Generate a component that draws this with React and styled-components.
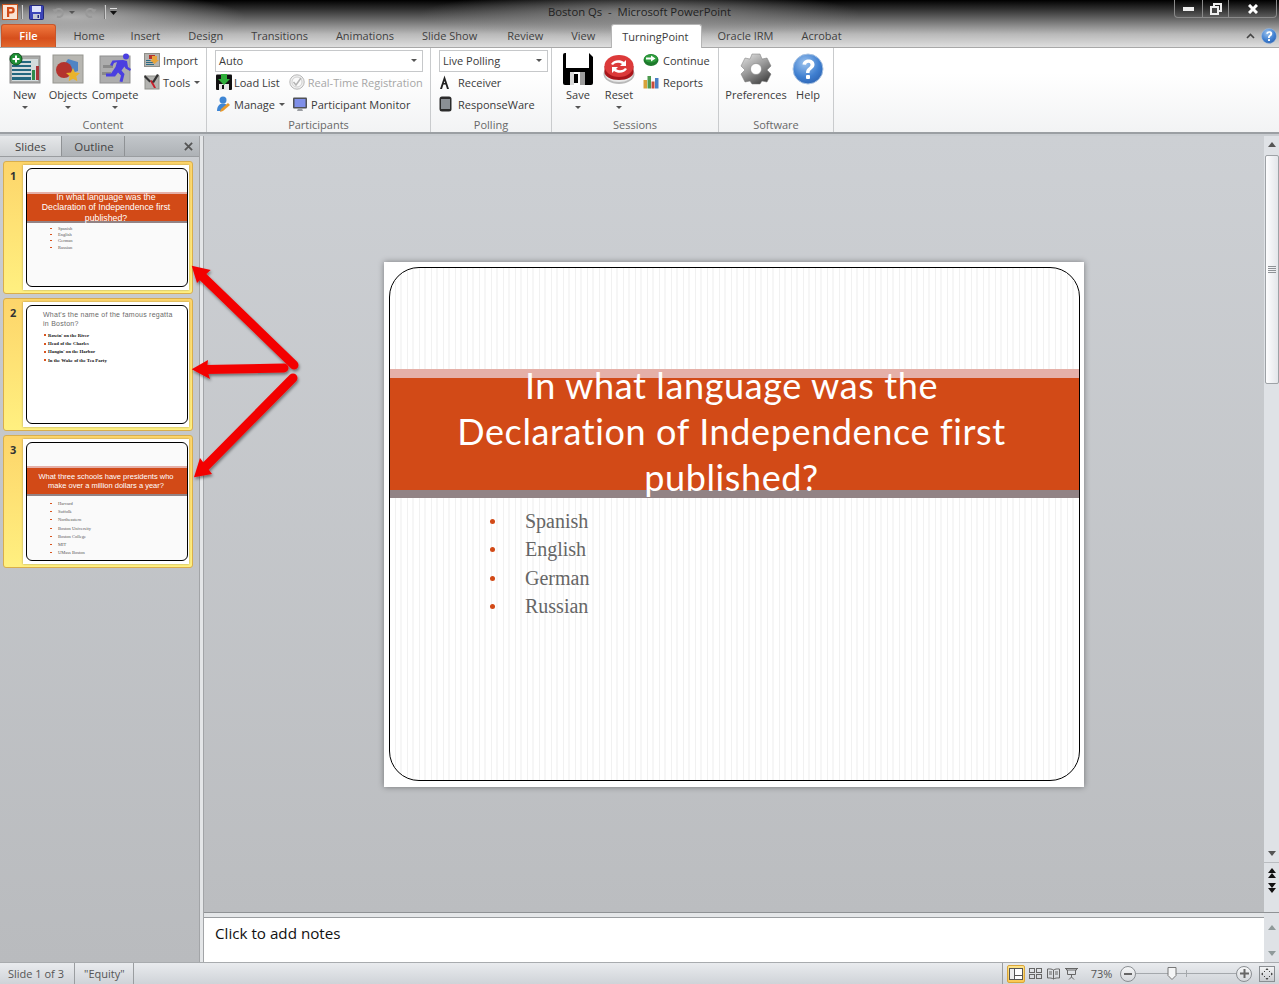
import React from "react";
import styled, { createGlobalStyle } from "styled-components";

const Global = createGlobalStyle`
  html, body { margin: 0; padding: 0; background: #c8ccd0; }
  * { box-sizing: border-box; }
`;

const Page = styled.div`
  position: relative;
  width: 1279px;
  height: 984px;
  overflow: hidden;
  display: flex;
  flex-direction: column;
  font-family: "Open Sans", "Noto Sans", sans-serif;
  font-size: 11px;
  color: #444;
`;

const Chrome = styled.div`
  height: 48px;
  flex: none;
  background:
    radial-gradient(ellipse 175px 26px at 70px 17px, rgba(185,185,185,0.9), rgba(185,185,185,0) 100%),
    radial-gradient(ellipse 220px 24px at 640px 14px, rgba(150,150,150,0.8), rgba(150,150,150,0) 100%),
    linear-gradient(to bottom, #000 0px, #2a2a2a 8px, #777 22px, #b8b8b8 34px, #dedede 47px);
`;

const TitleBar = styled.div`
  height: 24px;
  display: grid;
  grid-template-columns: 1fr auto 1fr;
  align-items: start;
`;

const Qat = styled.div`
  display: flex;
  align-items: center;
  height: 24px;
`;

const QatItem = styled.div`
  display: flex;
  align-items: center;
  flex: none;
  margin-left: ${(p) => p.$ml}px;
`;

const QatSep = styled.div`
  width: 2px;
  height: 14px;
  background: #777;
  border-right: 1px solid #ccc;
`;

const WindowTitle = styled.div`
  padding-top: 4px;
  font-size: 11.3px;
  color: #222;
  white-space: pre;
`;

const WindowControls = styled.div`
  justify-self: end;
  margin-right: 2px;
  display: flex;
  height: 18px;
  border: 1px solid #8a8a8a;
  border-top: none;
  border-radius: 0 0 4px 4px;
`;

const WindowButton = styled.div`
  width: ${(p) => p.$w}px;
  display: flex;
  align-items: center;
  justify-content: center;
  border-right: ${(p) => (p.$last ? "none" : "1px solid #8a8a8a")};
`;

const TabRow = styled.div`
  height: 24px;
  display: flex;
  align-items: stretch;
  padding-left: 1px;
  border-bottom: 1px solid #a8a8a8;
`;

const FileTab = styled.div`
  width: 55px;
  margin-right: 3.5px;
  padding-bottom: 1px;
  background: linear-gradient(to bottom, #f0793f, #d64f1c 60%, #e2682e);
  border: 1px solid #c8562a;
  border-bottom: none;
  border-radius: 3px 3px 0 0;
  color: #fff;
  font-weight: 600;
  display: flex;
  align-items: center;
  justify-content: center;
`;

const Tab = styled.div`
  padding: 0 ${(p) => p.$pr || 14}px 1px 14px;
  display: flex;
  align-items: center;
  color: #3f3f3f;
  white-space: nowrap;
`;

const ActiveTab = styled(Tab)`
  padding: 0 12px 1px 10px;
  margin: 0 2px -1px 2px;
  color: #3b3b3b;
  background: #fff;
  border: 1px solid #b5b5b5;
  border-bottom: none;
  border-radius: 3px 3px 0 0;
`;

const TabRight = styled.div`
  margin-left: auto;
  padding-right: 2px;
  display: flex;
  align-items: center;
  gap: 6px;
`;

const Ribbon = styled.div`
  height: 86px;
  flex: none;
  display: flex;
  background: linear-gradient(to bottom, #fff 30%, #f2f3f4);
  border-bottom: 2px solid #9b9fa3;
`;

const Group = styled.div`
  width: ${(p) => p.$w}px;
  flex: none;
  display: flex;
  flex-direction: column;
  border-right: 1px solid #c9cbcd;
  padding-left: ${(p) => p.$pad || 0}px;
`;

const GroupBody = styled.div`
  height: 69px;
  flex: none;
  display: flex;
`;

const GroupLabel = styled.div`
  height: 15px;
  margin-left: ${(p) => -(p.$pad || 0)}px;
  text-align: center;
  line-height: 15px;
  color: #686868;
`;

const LargeButton = styled.div`
  width: ${(p) => p.$w}px;
  flex: none;
  display: flex;
  flex-direction: column;
  align-items: center;
  padding-top: 4px;
  line-height: 13px;
  color: #3a3a3a;
  white-space: nowrap;
`;

const LargeIcon = styled.div`
  height: 34px;
  margin-bottom: 2px;
  display: flex;
  align-items: center;
  justify-content: center;
`;

const Caret = styled.span`
  display: inline-block;
  width: 0;
  height: 0;
  border-left: 3px solid transparent;
  border-right: 3px solid transparent;
  border-top: 3px solid #555;
  margin: ${(p) => p.$m || "5px 0 0 0"};
`;

const SmallCol = styled.div`
  display: flex;
  flex-direction: column;
  padding-top: 1px;
  margin-left: ${(p) => p.$ml || 0}px;
`;

const SmallRow = styled.div`
  height: 22px;
  display: flex;
  align-items: center;
  gap: ${(p) => p.$gap || 3}px;
  color: ${(p) => (p.$off ? "#a6a6a6" : "#3a3a3a")};
  white-space: nowrap;
`;

const SmallPair = styled.div`
  display: flex;
  margin-left: 1px;
  gap: ${(p) => p.$gap}px;
`;

const Combo = styled.div`
  height: 22px;
  width: ${(p) => p.$w}px;
  margin: 2px 0 -1px 0;
  border: 1px solid #c6c8ca;
  background: #fff;
  display: flex;
  align-items: center;
  justify-content: space-between;
  padding: 0 5px 1px 3px;
  color: #3a3a3a;
`;

const ParticipantCol = styled.div`
  display: flex;
  flex-direction: column;
`;

const Workspace = styled.div`
  flex: 1;
  min-height: 0;
  margin-top: 2px;
  display: flex;
`;

const LeftPane = styled.div`
  width: 200px;
  flex: none;
  display: flex;
  flex-direction: column;
  background: linear-gradient(to bottom, #cbced2, #b9bbbe);
  border-right: 1px solid #a2a4a7;
`;

const PaneTabs = styled.div`
  height: 21px;
  display: flex;
  flex: none;
  background: linear-gradient(to bottom, #c2c6ca, #aeb2b6);
  border-bottom: 1px solid #9a9da0;
`;

const PaneTab = styled.div`
  width: ${(p) => p.$w}px;
  display: flex;
  align-items: center;
  justify-content: center;
  font-size: 11.5px;
  color: #444;
  padding-left: ${(p) => p.$pad || 0}px;
  background: ${(p) => (p.$active ? "linear-gradient(to bottom, #e6e8ea, #cdd0d3)" : "transparent")};
  border-right: 1px solid #8f9295;
`;

const PaneClose = styled.div`
  margin-left: auto;
  padding-right: 6px;
  display: flex;
  align-items: center;
`;

const ThumbList = styled.div`
  padding: 4px 6px 0 3px;
  display: flex;
  flex-direction: column;
  gap: 4px;
`;

const ThumbCard = styled.div`
  height: 133px;
  display: flex;
  background: linear-gradient(to bottom, #fdd56a, #fff080);
  border: 1px solid #d9ae4c;
  border-radius: 3px;
  padding: 3px 3px 3px 6px;
`;

const ThumbNum = styled.div`
  width: 13px;
  flex: none;
  padding-top: 3px;
  font-weight: 700;
  font-size: 11px;
  color: #333;
`;

const ThumbPaper = styled.div`
  flex: 1;
  background: #fff;
  padding: 3px 1px 3px 3px;
  box-shadow: 0 0 2px rgba(0,0,0,0.35);
`;

const stripes = `repeating-linear-gradient(90deg, #fff 0, #fff 5px, #f1f1f1 5px, #f1f1f1 6px, #fff 6px, #fff 10px, #f6f6f6 10px, #f6f6f6 12px)`;

const ThumbFrame = styled.div`
  height: 100%;
  border: 1px solid #000;
  border-radius: 6px;
  overflow: hidden;
  padding-top: ${(p) => p.$top}px;
  background: ${(p) => (p.$plain ? "#fff" : "#fafafa")};
`;

const ThumbBand = styled.div`
  height: ${(p) => p.$h}px;
  background: #d24a17;
  border-top: 2px solid #e5b0a8;
  border-bottom: 2px solid #928385;
  display: flex;
  align-items: center;
  justify-content: center;
  text-align: center;
  color: #fff;
  font-family: "Liberation Sans", sans-serif;
  font-size: ${(p) => p.$fs}px;
  line-height: ${(p) => p.$lh}px;
  padding-right: 2px;
  white-space: nowrap;
`;

const ThumbTitle = styled.div`
  padding: 4px 0 0 16px;
  font-family: "Liberation Sans", sans-serif;
  font-size: 7px;
  line-height: 9px;
  letter-spacing: 0.25px;
  color: #6a6a6a;
  white-space: nowrap;
`;

const ThumbBullets = styled.ul`
  list-style: none;
  margin: 0;
  padding: ${(p) => p.$p};
  display: flex;
  flex-direction: column;
`;

const ThumbBullet = styled.li`
  height: ${(p) => p.$h}px;
  display: flex;
  align-items: center;
  font-family: "Liberation Serif", serif;
  font-size: ${(p) => p.$fs}px;
  font-weight: ${(p) => (p.$bold ? 700 : 400)};
  color: ${(p) => (p.$bold ? "#111" : "#555")};
  white-space: nowrap;
  &::before {
    content: "";
    width: 2px;
    height: ${(p) => (p.$bold ? 2 : 1)}px;
    background: #d9541e;
    margin-right: ${(p) => (p.$bold ? 2 : 6)}px;
    flex: none;
  }
`;

const Splitter = styled.div`
  width: 4px;
  flex: none;
  background: #e4e6e8;
  border-right: 1px solid #a2a4a7;
`;

const RightSide = styled.div`
  flex: 1;
  min-width: 0;
  display: flex;
  flex-direction: column;
`;

const EditRow = styled.div`
  flex: 1;
  min-height: 0;
  display: flex;
`;

const Stage = styled.div`
  flex: 1;
  display: flex;
  align-items: center;
  justify-content: center;
  background: linear-gradient(to bottom, #cdd0d4, #bbbdc0);
`;

const Slide = styled.div`
  width: 700px;
  height: 525px;
  background: #fff;
  padding: 5px 4px 6px 5px;
  box-shadow: 0 0 6px rgba(0,0,0,0.4);
`;

const SlideFrame = styled.div`
  height: 100%;
  border: 1px solid #000;
  border-radius: 30px;
  overflow: hidden;
  padding-top: 101px;
  background: ${stripes};
`;

const SlideBand = styled.div`
  height: 129px;
  background: #d24a17;
  border-top: 9px solid #e5b0a8;
  border-bottom: 8px solid #928385;
  display: flex;
  align-items: center;
  justify-content: center;
  padding: 0 6px 6px 0;
`;

const SlideTitle = styled.div`
  flex: none;
  color: #fff;
  text-align: center;
  font-family: "Lato", "Open Sans", sans-serif;
  font-size: 36px;
  line-height: 46px;
  letter-spacing: 0.62px;
`;

const SlideBullets = styled.ul`
  list-style: none;
  margin: 0;
  padding: 10px 0 0 100px;
`;

const SlideBullet = styled.li`
  height: 28.3px;
  display: flex;
  align-items: center;
  font-family: "Liberation Serif", serif;
  font-size: 20px;
  color: #666;
  &::before {
    content: "";
    width: 5px;
    height: 5px;
    border-radius: 50%;
    background: #d24a17;
    margin-right: 30px;
  }
`;

const VScroll = styled.div`
  width: 15px;
  flex: none;
  display: flex;
  flex-direction: column;
  align-items: center;
  background: #dfe2e6;
`;

const ScrollBtn = styled.div`
  width: 15px;
  height: ${(p) => p.$h || 17}px;
  flex: none;
  display: flex;
  align-items: center;
  justify-content: center;
  padding-bottom: ${(p) => p.$pb || 0}px;
  border-top: ${(p) => (p.$line ? "1px solid #b9bcc0" : "none")};
`;

const ScrollThumb = styled.div`
  width: 14px;
  height: 229px;
  margin-top: 2px;
  flex: none;
  background: linear-gradient(to right, #fdfdfe, #e3e6ea);
  border: 1px solid #9ea2a6;
  border-radius: 2px;
  display: flex;
  align-items: center;
  justify-content: center;
`;

const Grip = styled.div`
  width: 8px;
  height: 7px;
  background: repeating-linear-gradient(to bottom, #8e9296 0, #8e9296 1px, transparent 1px, transparent 2px);
`;

const ScrollSpace = styled.div`
  flex: 1;
`;

const Tri = styled.span`
  width: 0;
  height: 0;
  border-left: 4px solid transparent;
  border-right: 4px solid transparent;
  ${(p) => (p.$up ? "border-bottom" : "border-top")}: 5px solid ${(p) => p.$c || "#555"};
`;

const PageStep = styled.div`
  display: flex;
  flex-direction: column;
  align-items: center;
  gap: ${(p) => p.$gap}px;
`;

const NotesRow = styled.div`
  height: 50px;
  flex: none;
  display: flex;
  border-top: 1px solid #8f9295;
  background: #e4e6e8;
  padding-top: 4px;
`;

const Notes = styled.div`
  flex: 1;
  background: #fff;
  border-top: 1px solid #9a9da0;
  padding: 4px 0 0 11px;
  font-size: 15.2px;
  line-height: 22px;
  color: #111;
`;

const NotesScroll = styled(VScroll)`
  justify-content: space-between;
  margin-top: -4px;
  padding: 12px 0 6px;
`;

const StatusBar = styled.div`
  height: 22px;
  flex: none;
  display: flex;
  align-items: center;
  background: linear-gradient(to bottom, #e9ebee, #cfd3d8);
  border-top: 1px solid #a8abae;
  color: #555;
`;

const StatusCell = styled.div`
  height: 100%;
  width: ${(p) => p.$w}px;
  display: flex;
  align-items: center;
  padding-left: ${(p) => p.$pad}px;
  border-right: 1px solid #9a9da0;
  white-space: nowrap;
`;

const StatusRight = styled.div`
  margin-left: auto;
  height: 100%;
  display: flex;
  align-items: center;
  border-left: 1px solid #9a9da0;
  padding-left: 4px;
`;

const ViewBtn = styled.div`
  width: ${(p) => p.$w || 18}px;
  height: 18px;
  flex: none;
  display: flex;
  align-items: center;
  justify-content: center;
  background: ${(p) => (p.$active ? "linear-gradient(to bottom, #fde48c, #fbc850)" : "transparent")};
  border: ${(p) => (p.$active ? "1px solid #d9a53a" : "none")};
  border-radius: 2px;
`;

const Zoom = styled.div`
  width: 37px;
  margin-left: 2px;
  text-align: center;
  color: #555;
`;

const RoundBtn = styled.div`
  width: 16px;
  height: 16px;
  flex: none;
  border: 1px solid #8a8e92;
  border-radius: 50%;
  background: linear-gradient(to bottom, #f6f7f8, #d5d8dc);
  display: flex;
  align-items: center;
  justify-content: center;
  color: #555;
`;

const SliderTrack = styled.div`
  position: relative;
  width: 100px;
  height: 1px;
  background: #a4a8ac;
`;

const SliderThumb = styled.svg`
  position: absolute;
  left: 31px;
  top: -6px;
`;

const SliderTick = styled.div`
  position: absolute;
  left: 50px;
  top: -3px;
  width: 1px;
  height: 7px;
  background: #a4a8ac;
`;

const FitBtn = styled.div`
  width: 16px;
  height: 16px;
  margin: 0 4px 0 7px;
  flex: none;
  border: 1px solid #8a8e92;
  background: linear-gradient(to bottom, #f3f4f5, #c9ccd0);
  display: flex;
  align-items: center;
  justify-content: center;
`;

const ArrowLayer = styled.svg`
  position: absolute;
  left: 0;
  top: 0;
  pointer-events: none;
`;

/* drawings */
const PptLogo = () => (
  <svg width="16" height="16" viewBox="0 0 16 16">
    <rect x="0.5" y="0.5" width="15" height="15" fill="#fbe3d4" stroke="#c9551f" />
    <path d="M5 3h4.5a3 3 0 0 1 0 6.4H7.2V13H5z M7.2 5v2.4h2a1.2 1.2 0 0 0 0-2.4z" fill="#d14a17" fillRule="evenodd" />
  </svg>
);

const QatSave = () => (
  <svg width="15" height="15" viewBox="0 0 15 15">
    <rect x="0.5" y="0.5" width="14" height="14" rx="1" fill="#3c45b8" stroke="#23287c" />
    <rect x="3" y="1" width="9" height="6" fill="#dfe3fb" />
    <rect x="4" y="9" width="7" height="5" fill="#c5c8d6" />
    <rect x="8.5" y="10" width="1.5" height="3" fill="#23287c" />
  </svg>
);

const QatUndo = ({ flip }) => (
  <svg width="13" height="13" viewBox="0 0 13 13" style={flip ? { transform: "scaleX(-1)" } : undefined}>
    <path d="M3 6a4 4 0 1 1 2 4.5" fill="none" stroke="#999" strokeWidth="2" />
    <path d="M0.5 3.5L6 3 3.5 8z" fill="#999" />
  </svg>
);

const QatCustom = () => (
  <svg width="8" height="9" viewBox="0 0 8 9">
    <rect y="0" width="7" height="1" fill="#ddd" />
    <path d="M0 3h7L3.5 7z" fill="#111" />
  </svg>
);

const HelpDot = ({ s = 16 }) => (
  <svg width={s} height={s} viewBox="0 0 32 32">
    <defs>
      <radialGradient id={`h${s}`} cx="0.4" cy="0.3" r="0.8">
        <stop offset="0" stopColor="#9cc3ee" />
        <stop offset="0.6" stopColor="#3f7fd0" />
        <stop offset="1" stopColor="#2a5fae" />
      </radialGradient>
    </defs>
    <circle cx="16" cy="16" r="15" fill={`url(#h${s})`} stroke="#a9c3e2" />
    <path d="M10.5 11.5c.5-3.5 3-5 6-5 3.600 0 6 2 6 5 0 4.500-5 4.500-5 8.500h-3.500c0-5.500 4.500-5.500 4.500-8.300 0-1.200-.8-2-2-2-1.400 0-2.200.8-2.500 2z" fill="#fff" />
    <rect x="14" y="22" width="4" height="4" rx="1" fill="#fff" />
  </svg>
);

const NewIcon = () => (
  <svg width="32" height="32" viewBox="0 0 32 32">
    <rect x="1" y="3" width="30" height="27" fill="#a9aaa8" stroke="#8b8b8b" />
    <rect x="3" y="6" width="26" height="22" fill="#d4dbdd" />
    <g fill="#23677f">
      <rect x="3" y="12" width="19" height="2" />
      <rect x="3" y="16" width="19" height="2" />
      <rect x="3" y="20" width="19" height="2" />
      <rect x="3" y="24" width="19" height="3" />
    </g>
    <rect x="10" y="8" width="12" height="2" fill="#23677f" />
    <rect x="23" y="17" width="3" height="10" fill="#2f8a4c" />
    <rect x="27" y="13" width="3" height="14" fill="#a8343a" />
    <circle cx="7" cy="6" r="6" fill="#1e8f35" stroke="#0c4f1a" />
    <path d="M6 2.500h2v2.500h2.500v2H8v2.500H6V7H3.500V5H6z" fill="#fff" />
  </svg>
);

const ObjectsIcon = () => (
  <svg width="32" height="32" viewBox="0 0 32 32">
    <rect x="1" y="2" width="30" height="28" fill="#b7b6b1" stroke="#969690" />
    <path d="M16 6l10 3 0 9-9 3-6-8z" fill="#4f84c4" />
    <circle cx="12" cy="17" r="8" fill="#b4332e" />
    <path d="M21 15l2 4.500 5 .5-3.700 3.300 1 5-4.300-2.600-4.300 2.600 1-5L14 20l5-.5z" fill="#e9b32b" />
  </svg>
);

const CompeteIcon = () => (
  <svg width="32" height="32" viewBox="0 0 32 32">
    <rect x="1" y="3" width="30" height="27" fill="#adadad" stroke="#909090" />
    <path d="M4 12h10v3H4zM3 19h9v3H3z" fill="#8a8a8a" />
    <circle cx="27" cy="3.500" r="3" fill="#4a3fe0" />
    <path d="M24 7l4 1 1 6 3 2-1 2-4.500-2.500-1-2-3 4 3 3.500-2 8-3-.5 1.500-6-3-3-3 4H7v-3h5l4.500-6.500 1.500-5-3 1-1.500 3-2.500-1 2.500-4.500z" fill="#4a3fe0" />
  </svg>
);

const ImportIcon = () => (
  <svg width="16" height="16" viewBox="0 0 16 16">
    <rect x="0.5" y="1.500" width="15" height="13" fill="#b5b4b0" stroke="#8f8f8a" />
    <g fill="#2c6b84">
      <rect x="2" y="8" width="8" height="1" />
      <rect x="2" y="10" width="8" height="1" />
      <rect x="2" y="12" width="8" height="1" />
    </g>
    <rect x="5" y="3" width="6" height="4" fill="#b4332e" />
    <path d="M8 4h5v4h2l-4.500 4L6 8h2z" fill="#e8a43a" />
  </svg>
);

const ToolsIcon = () => (
  <svg width="16" height="16" viewBox="0 0 16 16">
    <rect x="1" y="2" width="14" height="13" fill="#b3b3b0" stroke="#8f8f8a" />
    <path d="M1 1l6 6-1.500 1.500L0 3z" fill="#333" />
    <path d="M6 7l4 7h2L8 6z" fill="#c8202c" />
    <path d="M15 1l-5 8-2-1 5-8z" fill="#333" />
  </svg>
);

const LoadListIcon = () => (
  <svg width="16" height="16" viewBox="0 0 16 16">
    <rect x="0" y="0.500" width="16" height="15.500" rx="1" fill="#111" />
    <rect x="3" y="10" width="10" height="6" fill="#e6e6e6" />
    <rect x="6" y="11" width="2" height="4" fill="#111" />
    <path d="M5 0h6v5h3l-6 6-6-6h3z" fill="#2fae3a" />
  </svg>
);

const ClockIcon = () => (
  <svg width="16" height="16" viewBox="0 0 16 16">
    <circle cx="8" cy="8" r="7.200" fill="#efefef" stroke="#b8b8b8" />
    <circle cx="8" cy="8" r="5" fill="#fafafa" stroke="#d0d0d0" />
    <path d="M4.500 8l2.500 3 5-7" fill="none" stroke="#b4b4b4" strokeWidth="1.500" />
  </svg>
);

const ManageIcon = () => (
  <svg width="15" height="16" viewBox="0 0 15 16">
    <circle cx="7" cy="4" r="3.500" fill="#3f86d4" />
    <path d="M1 15c0-5 2.500-7.500 6-7.500 2 0 3 .7 4 1.500L6 15z" fill="#3f86d4" />
    <path d="M12 7l2 2-7 6-3 1 1-3z" fill="#e89a2e" />
  </svg>
);

const MonitorIcon = () => (
  <svg width="16" height="15" viewBox="0 0 16 15">
    <rect x="1" y="0.500" width="14" height="11" rx="1" fill="#4f5156" />
    <rect x="2.500" y="2" width="11" height="8" fill="#7f8fe8" />
    <path d="M6 11.500h4l1 2.500H5z" fill="#9a9da2" />
  </svg>
);

const ReceiverIcon = () => (
  <svg width="11" height="15" viewBox="0 0 11 15">
    <path d="M5.500 0.500L10 14H8L5.500 6 3 14H1z" fill="#222" />
    <rect x="3" y="8" width="5" height="1.500" fill="#222" />
  </svg>
);

const PhoneIcon = () => (
  <svg width="13" height="16" viewBox="0 0 13 16">
    <rect x="0.500" y="0.500" width="12" height="15" rx="2.500" fill="#2b2b2b" />
    <rect x="2" y="3" width="9" height="10" fill="#8a8f94" />
  </svg>
);

const SaveIcon = () => (
  <svg width="30" height="32" viewBox="0 0 30 32">
    <path d="M0 2a2 2 0 0 1 2-2h24l4 4v26a2 2 0 0 1-2 2H2a2 2 0 0 1-2-2z" fill="#000" />
    <rect x="3" y="0" width="23" height="15" fill="#fff" />
    <rect x="7" y="19" width="15" height="13" fill="#fff" />
    <rect x="7" y="19" width="4" height="13" fill="#d8d8d8" />
    <rect x="11" y="21" width="4" height="9" fill="#000" />
    <rect x="17" y="19" width="5" height="13" fill="#9c9c9c" />
  </svg>
);

const ResetIcon = () => (
  <svg width="32" height="32" viewBox="0 0 32 32">
    <ellipse cx="16" cy="21" rx="15.500" ry="10" fill="#b9b9b9" />
    <ellipse cx="16" cy="21" rx="14" ry="8" fill="#e8e8e8" />
    <path d="M1.500 13v6c0 4.500 6.500 8 14.500 8s14.500-3.500 14.500-8v-6z" fill="#a9161b" />
    <ellipse cx="16" cy="13" rx="14.500" ry="11" fill="#dc3a3a" />
    <path d="M8 11c2-4 9-5 13-2l2-2v6h-6l2-2c-3-2-7-1.500-9 1zM24 16c-2 4-9 5-13 2l-2 2v-6h6l-2 2c3 2 7 1.500 9-1z" fill="#fff" />
  </svg>
);

const ContinueIcon = () => (
  <svg width="16" height="14" viewBox="0 0 16 14">
    <ellipse cx="8" cy="7" rx="7.500" ry="6" fill="#1d7a2c" />
    <ellipse cx="8" cy="5.500" rx="6.500" ry="4" fill="#2d9c3c" />
    <path d="M3 4.500h5V2.500l4.500 3L8 8.500V6.500H3z" fill="#fff" />
  </svg>
);

const ReportsIcon = () => (
  <svg width="16" height="14" viewBox="0 0 16 14">
    <rect x="0.500" y="5" width="3.500" height="8.500" fill="#d7a23a" />
    <rect x="4.500" y="1" width="3.500" height="12.500" fill="#4c9a4e" />
    <rect x="8.500" y="6.500" width="3" height="7" fill="#c94b3a" />
    <rect x="12" y="3" width="3.500" height="10.500" fill="#4a7fc4" />
  </svg>
);

const GearIcon = () => (
  <svg width="32" height="32" viewBox="0 0 32 32">
    <defs>
      <linearGradient id="gear" x1="0" y1="0" x2="0.6" y2="1">
        <stop offset="0" stopColor="#e8e8e8" />
        <stop offset="0.55" stopColor="#9a9a9a" />
        <stop offset="1" stopColor="#4d4d4d" />
      </linearGradient>
    </defs>
    <path fillRule="evenodd" fill="url(#gear)" stroke="#777" strokeWidth="0.5"
      d="M12 1h8l2 5 5-1 4 8-4 4 4 4-4 8-5-1-2 3h-8l-2-3-5 1-4-8 4-4-4-4 4-8 5 1z M16 10.500a5.500 5.500 0 1 0 0 11 5.500 5.500 0 0 0 0-11z" />
  </svg>
);

const CloseX = ({ s = 10, c = "#fff", w = 3 }) => (
  <svg width={s} height={s} viewBox="0 0 10 10">
    <path d="M1 1l8 8M9 1l-8 8" stroke={c} strokeWidth={w} />
  </svg>
);

const NormalView = () => (
  <svg width="14" height="12" viewBox="0 0 14 12">
    <rect x="0.500" y="0.500" width="13" height="11" fill="#fff" stroke="#555" />
    <path d="M5.500 0.500v11M5.500 7.500h8" stroke="#555" />
    <rect x="1" y="1" width="4" height="10" fill="#eee" />
  </svg>
);

const SorterView = () => (
  <svg width="13" height="11" viewBox="0 0 13 11" fill="none" stroke="#666">
    <rect x="0.500" y="0.500" width="5" height="4" />
    <rect x="7.500" y="0.500" width="5" height="4" />
    <rect x="0.500" y="6.500" width="5" height="4" />
    <rect x="7.500" y="6.500" width="5" height="4" />
  </svg>
);

const ReadingView = () => (
  <svg width="13" height="12" viewBox="0 0 13 12" fill="none" stroke="#666">
    <path d="M6.500 2C5 1 3 .8.500 1v9c2.500-.2 4.500 0 6 1 1.500-1 3.500-1.200 6-1V1C10 .8 8 1 6.500 2zM6.500 2v9" />
    <path d="M2 4h3M2 6h3M8 4h3M8 6h3" />
  </svg>
);

const ShowView = () => (
  <svg width="13" height="12" viewBox="0 0 13 12" fill="none" stroke="#666">
    <path d="M0 .5h13M1.500 .5v1.500h10V.5M2.500 2v4.500h8V2M6.500 6.500V9M4 11.500l2.500-2.500L9 11.500" />
  </svg>
);

const FitIcon = () => (
  <svg width="12" height="12" viewBox="0 0 12 12" fill="#444">
    <path d="M6 0l1.500 2h-3zM6 12l1.500-2h-3zM0 6l2-1.500v3zM12 6l-2-1.500v3z" />
    <rect x="3" y="3" width="1" height="1" />
    <rect x="8" y="3" width="1" height="1" />
    <rect x="3" y="8" width="1" height="1" />
    <rect x="8" y="8" width="1" height="1" />
  </svg>
);

const Arrow = ({ from, to, head }) => (
  <g>
    <line x1={from[0]} y1={from[1]} x2={to[0]} y2={to[1]} stroke="#f30000" strokeWidth="9" strokeLinecap="round" />
    <polygon points={head} fill="#f30000" />
  </g>
);

const ThumbSlide = ({ n, top, band, title, items, plain }) => (
  <ThumbCard>
    <ThumbNum>{n}</ThumbNum>
    <ThumbPaper>
      <ThumbFrame $top={top} $plain={plain}>
        {band && (
          <ThumbBand $h={band.h} $fs={band.fs} $lh={band.lh}>
            <div>{title}</div>
          </ThumbBand>
        )}
        {plain && <ThumbTitle>{title}</ThumbTitle>}
        <ThumbBullets $p={items.pad}>
          {items.list.map((t) => (
            <ThumbBullet key={t} $h={items.h} $fs={items.fs} $bold={plain}>
              {t}
            </ThumbBullet>
          ))}
        </ThumbBullets>
      </ThumbFrame>
    </ThumbPaper>
  </ThumbCard>
);

export default function App() {
  return (
    <Page>
      <Global />
      <Chrome>
        <TitleBar>
          <Qat>
            <QatItem $ml={2}><PptLogo /></QatItem>
            <QatItem $ml={3}><QatSep /></QatItem>
            <QatItem $ml={6}><QatSave /></QatItem>
            <QatItem $ml={8}><QatUndo /></QatItem>
            <QatItem $ml={4}><Caret $m="0" /></QatItem>
            <QatItem $ml={9}><QatUndo flip /></QatItem>
            <QatItem $ml={7}><QatSep /></QatItem>
            <QatItem $ml={4}><QatCustom /></QatItem>
          </Qat>
          <WindowTitle>Boston Qs  -  Microsoft PowerPoint</WindowTitle>
          <WindowControls>
            <WindowButton $w={28}>
              <svg width="11" height="4"><rect width="11" height="4" fill="#eee" /></svg>
            </WindowButton>
            <WindowButton $w={26}>
              <svg width="12" height="12" viewBox="0 0 12 12" fill="none" stroke="#eee" strokeWidth="2">
                <rect x="4" y="1" width="7" height="7" />
                <rect x="1" y="4" width="7" height="7" fill="#444" />
              </svg>
            </WindowButton>
            <WindowButton $w={47} $last>
              <CloseX />
            </WindowButton>
          </WindowControls>
        </TitleBar>
        <TabRow>
          <FileTab>File</FileTab>
          <Tab $pr={12}>Home</Tab>
          <Tab>Insert</Tab>
          <Tab>Design</Tab>
          <Tab>Transitions</Tab>
          <Tab>Animations</Tab>
          <Tab $pr={16}>Slide Show</Tab>
          <Tab>Review</Tab>
          <Tab>View</Tab>
          <ActiveTab>TurningPoint</ActiveTab>
          <Tab>Oracle IRM</Tab>
          <Tab>Acrobat</Tab>
          <TabRight>
            <svg width="9" height="6" viewBox="0 0 9 6">
              <path d="M1 5l3.500-3.500L8 5" fill="none" stroke="#444" strokeWidth="1.600" />
            </svg>
            <HelpDot />
          </TabRight>
        </TabRow>
      </Chrome>

      <Ribbon>
        <Group $w={207} $pad={7}>
          <GroupBody>
            <LargeButton $w={35}><LargeIcon><NewIcon /></LargeIcon>New<Caret /></LargeButton>
            <LargeButton $w={52}><LargeIcon><ObjectsIcon /></LargeIcon>Objects<Caret /></LargeButton>
            <LargeButton $w={42}><LargeIcon><CompeteIcon /></LargeIcon>Compete<Caret /></LargeButton>
            <SmallCol $ml={8}>
              <SmallRow><ImportIcon />Import</SmallRow>
              <SmallRow><ToolsIcon />Tools<Caret $m="0 0 0 1px" /></SmallRow>
            </SmallCol>
          </GroupBody>
          <GroupLabel $pad={7}>Content</GroupLabel>
        </Group>
        <Group $w={224} $pad={8}>
          <GroupBody>
            <ParticipantCol>
              <Combo $w={208}>Auto<Caret $m="0" /></Combo>
              <SmallRow>
                <SmallPair $gap={9}>
                  <SmallRow $gap={2}><LoadListIcon />Load List</SmallRow>
                  <SmallRow $gap={3} $off><ClockIcon />Real-Time Registration</SmallRow>
                </SmallPair>
              </SmallRow>
              <SmallRow>
                <SmallPair $gap={7}>
                  <SmallRow $gap={3}><ManageIcon />Manage<Caret $m="0 0 0 1px" /></SmallRow>
                  <SmallRow $gap={3}><MonitorIcon />Participant Monitor</SmallRow>
                </SmallPair>
              </SmallRow>
            </ParticipantCol>
          </GroupBody>
          <GroupLabel $pad={8}>Participants</GroupLabel>
        </Group>
        <Group $w={121} $pad={8}>
          <GroupBody>
            <ParticipantCol>
              <Combo $w={109}>Live Polling<Caret $m="0" /></Combo>
              <SmallRow $gap={8}><ReceiverIcon />Receiver</SmallRow>
              <SmallRow $gap={6}><PhoneIcon />ResponseWare</SmallRow>
            </ParticipantCol>
          </GroupBody>
          <GroupLabel $pad={8}>Polling</GroupLabel>
        </Group>
        <Group $w={167} $pad={6}>
          <GroupBody>
            <LargeButton $w={40}><LargeIcon><SaveIcon /></LargeIcon>Save<Caret /></LargeButton>
            <LargeButton $w={42}><LargeIcon><ResetIcon /></LargeIcon>Reset<Caret /></LargeButton>
            <SmallCol $ml={3}>
              <SmallRow $gap={4}><ContinueIcon />Continue</SmallRow>
              <SmallRow $gap={4}><ReportsIcon />Reports</SmallRow>
            </SmallCol>
          </GroupBody>
          <GroupLabel $pad={6}>Sessions</GroupLabel>
        </Group>
        <Group $w={115} $pad={5}>
          <GroupBody>
            <LargeButton $w={64}><LargeIcon><GearIcon /></LargeIcon>Preferences</LargeButton>
            <LargeButton $w={40}><LargeIcon><HelpDot s={32} /></LargeIcon>Help</LargeButton>
          </GroupBody>
          <GroupLabel $pad={5}>Software</GroupLabel>
        </Group>
      </Ribbon>

      <Workspace>
        <LeftPane>
          <PaneTabs>
            <PaneTab $w={62} $active>Slides</PaneTab>
            <PaneTab $w={63} $pad={2}>Outline</PaneTab>
            <PaneClose><CloseX s={9} c="#555" w={2} /></PaneClose>
          </PaneTabs>
          <ThumbList>
            <ThumbSlide
              n="1"
              top={23}
              band={{ h: 31, fs: 8.75, lh: 10.500 }}
              title={<>In what language was the<br />Declaration of Independence first<br />published?</>}
              items={{
                pad: "2px 0 0 23px",
                h: 6.4,
                fs: 4.500,
                list: ["Spanish", "English", "German", "Russian"],
              }}
            />
            <ThumbSlide
              n="2"
              top={0}
              plain
              title={<>What's the name of the famous regatta<br />in Boston?</>}
              items={{
                pad: "3px 0 0 17px",
                h: 8.400,
                fs: 4.800,
                list: ["Rowin' on the River", "Head of the Charles", "Hangin' on the Harbor", "In the Wake of the Tea Party"],
              }}
            />
            <ThumbSlide
              n="3"
              top={23}
              band={{ h: 30, fs: 7.5, lh: 9 }}
              title={<>What three schools have presidents who<br />make over a million dollars a year?</>}
              items={{
                pad: "3px 0 0 23px",
                h: 8.300,
                fs: 4.500,
                list: ["Harvard", "Suffolk", "Northeastern", "Boston University", "Boston College", "MIT", "UMass Boston"],
              }}
            />
          </ThumbList>
        </LeftPane>
        <Splitter />
        <RightSide>
          <EditRow>
            <Stage>
              <Slide>
                <SlideFrame>
                  <SlideBand>
                    <SlideTitle>
                      In what language was the<br />
                      Declaration of Independence first<br />
                      published?
                    </SlideTitle>
                  </SlideBand>
                  <SlideBullets>
                    <SlideBullet>Spanish</SlideBullet>
                    <SlideBullet>English</SlideBullet>
                    <SlideBullet>German</SlideBullet>
                    <SlideBullet>Russian</SlideBullet>
                  </SlideBullets>
                </SlideFrame>
              </Slide>
            </Stage>
            <VScroll>
              <ScrollBtn><Tri $up /></ScrollBtn>
              <ScrollThumb><Grip /></ScrollThumb>
              <ScrollSpace />
              <ScrollBtn><Tri /></ScrollBtn>
              <ScrollBtn $h={50} $pb={14} $line>
                <PageStep $gap={5}>
                  <PageStep $gap={0}><Tri $up $c="#111" /><Tri $up $c="#111" /></PageStep>
                  <PageStep $gap={0}><Tri $c="#111" /><Tri $c="#111" /></PageStep>
                </PageStep>
              </ScrollBtn>
            </VScroll>
          </EditRow>
          <NotesRow>
            <Notes>Click to add notes</Notes>
            <NotesScroll>
              <Tri $up $c="#8f9a9a" />
              <Tri $c="#8f9a9a" />
            </NotesScroll>
          </NotesRow>
        </RightSide>
      </Workspace>

      <StatusBar>
        <StatusCell $w={75} $pad={8}>Slide 1 of 3</StatusCell>
        <StatusCell $w={59} $pad={9}>"Equity"</StatusCell>
        <StatusRight>
          <ViewBtn $active><NormalView /></ViewBtn>
          <ViewBtn $w={20}><SorterView /></ViewBtn>
          <ViewBtn $w={16}><ReadingView /></ViewBtn>
          <ViewBtn $w={20}><ShowView /></ViewBtn>
          <Zoom>73%</Zoom>
          <RoundBtn>
            <svg width="8" height="2"><rect width="8" height="2" fill="#666" /></svg>
          </RoundBtn>
          <SliderTrack>
            <SliderThumb width="10" height="13" viewBox="0 0 10 13">
              <path d="M1 .5h8v8l-4 4-4-4z" fill="#f4f5f6" stroke="#777" />
            </SliderThumb>
            <SliderTick />
          </SliderTrack>
          <RoundBtn>
            <svg width="9" height="9"><path d="M3.500 0h2v3.500H9v2H5.500V9h-2V5.500H0v-2h3.500z" fill="#666" /></svg>
          </RoundBtn>
          <FitBtn><FitIcon /></FitBtn>
        </StatusRight>
      </StatusBar>

      <ArrowLayer width="1279" height="984" viewBox="0 0 1279 984">
        <defs>
          <filter id="arrowShadow" x="-20%" y="-20%" width="140%" height="140%">
            <feDropShadow dx="1" dy="2" stdDeviation="1.500" floodColor="#000" floodOpacity="0.45" />
          </filter>
        </defs>
        <g filter="url(#arrowShadow)">
          <Arrow from={[294, 365]} to={[203, 277]} head="191.700,265.700 210.700,270 204,276 197,283" />
          <Arrow from={[284, 368]} to={[205, 369.500]} head="191.700,369.300 208,360 207,369 210,379" />
          <Arrow from={[293, 378]} to={[205, 467]} head="194,477.300 200,458 206,466 212,474" />
        </g>
      </ArrowLayer>
    </Page>
  );
}
